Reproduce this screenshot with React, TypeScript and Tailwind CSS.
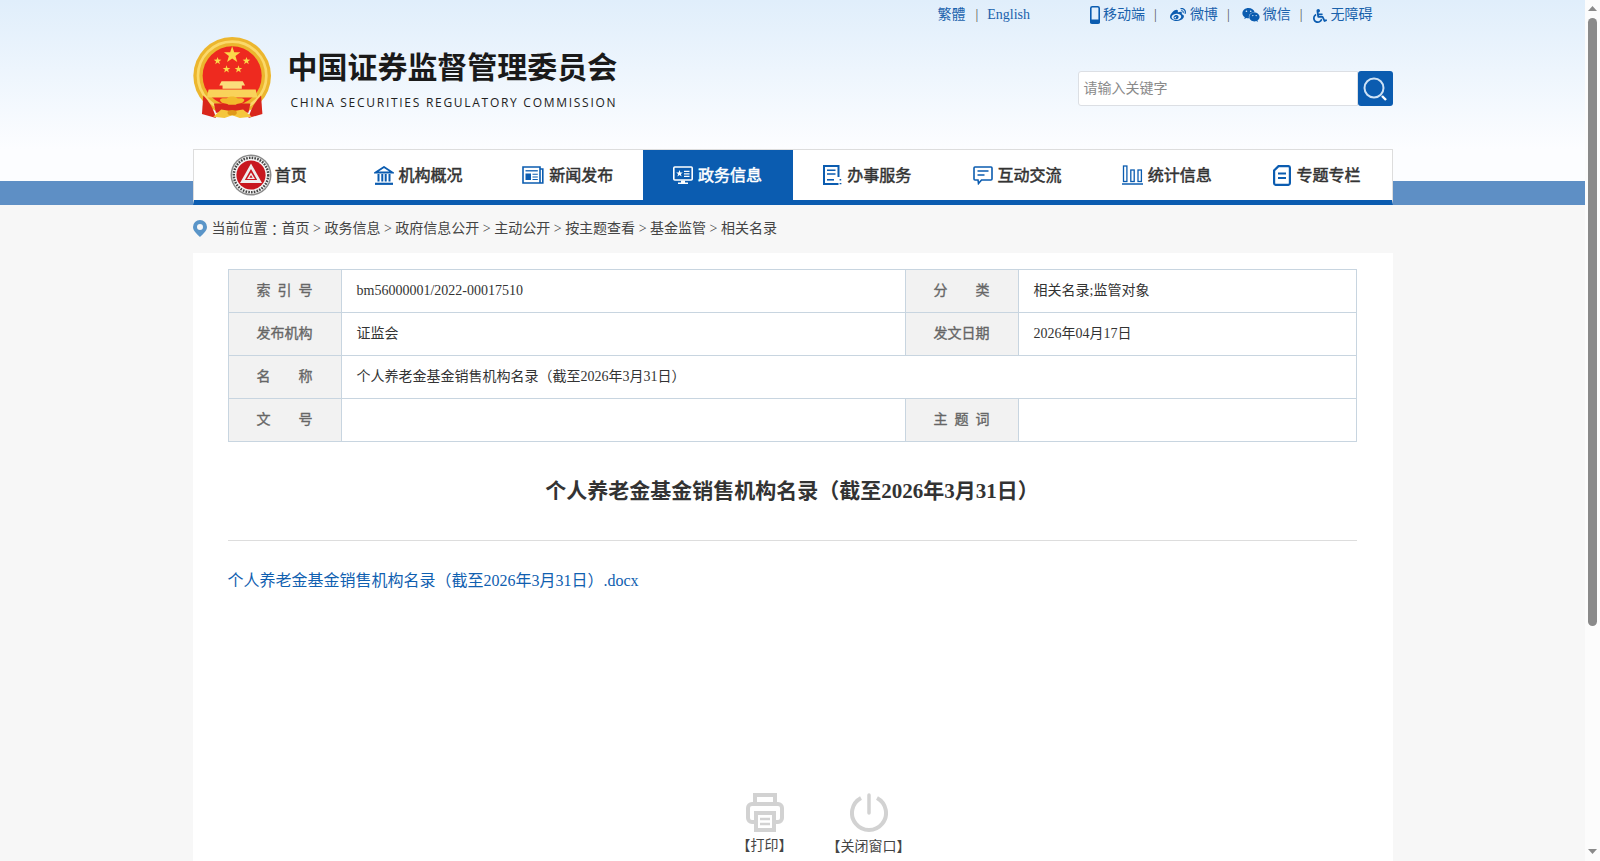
import React from "react";
import { FaWeibo, FaWeixin, FaWheelchair } from "react-icons/fa";

const Sep = () => <span className="mx-[9px] text-[#555]">|</span>;

const Star = ({ x, y, r }: { x: number; y: number; r: number }) => {
  const pts: string[] = [];
  for (let i = 0; i < 10; i++) {
    const rad = i % 2 === 0 ? r : r * 0.4;
    const a = (Math.PI / 5) * i - Math.PI / 2;
    pts.push(`${x + rad * Math.cos(a)},${y + rad * Math.sin(a)}`);
  }
  return <polygon points={pts.join(" ")} fill="#fbd94a" />;
};

const Emblem = () => (
  <svg viewBox="10 22 236 250" className="w-[79px] h-[83px] shrink-0">
    <circle cx="127" cy="139" r="117" fill="#ecb62e" />
    <circle cx="127" cy="139" r="103" fill="none" stroke="#fbd96a" strokeWidth="8" />
    <circle cx="127" cy="139" r="89" fill="#ee2a1f" />
    <Star x={127} y={76} r={26} />
    <Star x={83} y={94} r={12} />
    <Star x={170} y={94} r={12} />
    <Star x={110} y={119} r={12} />
    <Star x={146} y={119} r={12} />
    <path d="M95 155 L159 155 L166 168 L156 168 L156 178 L98 178 L98 168 L88 168 Z" fill="#fbdc7c" />
    <path d="M56 180 L198 180 L203 204 L51 204 Z" fill="#f9d25a" />
    <path d="M72 222 H182 L176 250 H78 Z" fill="#d9261c" />
    <path d="M40 198 C58 216 72 240 78 266 L36 254 Z" fill="#d9261c" />
    <path d="M214 198 C196 216 182 240 176 266 L218 254 Z" fill="#d9261c" />
    <path d="M90 212 C96 202 108 210 114 204 C120 200 134 200 140 204 C146 210 158 202 164 212 C158 226 146 220 138 226 L116 226 C108 220 96 226 90 212 Z" fill="#f2bb2c" />
    <path d="M70 262 L94 240 L127 246 L160 240 L186 262 L150 266 L127 258 L104 266 Z" fill="#f5c63c" />
    <ellipse cx="127" cy="250" rx="14" ry="8" fill="#e0991a" />
  </svg>
);

const HomeLogo = () => (
  <svg viewBox="0 0 42 42" className="w-[42px] h-[42px] shrink-0">
    <circle cx="21" cy="21" r="20.5" fill="#8b8b8b" />
    <circle cx="21" cy="21" r="19" fill="#f4f4f4" />
    <circle cx="21" cy="21" r="17.2" fill="none" stroke="#444" strokeWidth="2.4" strokeDasharray="1.6 1.2" />
    <circle cx="21" cy="21" r="14.6" fill="#c8171f" />
    <path d="M21 9.5 L32 29 L10 29 Z M21 15 L14.8 26 L27.2 26 Z" fill="#eee" fillRule="evenodd" />
    <path d="M21 18.5 L25 25 L17 25 Z" fill="#eee" />
    <path d="M21 21 L22.6 23.8 L19.4 23.8 Z" fill="#c8171f" />
  </svg>
);

const IconBank = () => (
  <svg viewBox="0 0 20 19" className="w-5 h-[19px]" fill="none" stroke="#0b5cb0" strokeWidth="1.8">
    <path d="M1.5 6.5 L10 1 L18.5 6.5 Z" />
    <path d="M4.5 8 V15.5 M8.3 8 V15.5 M11.7 8 V15.5 M15.5 8 V15.5" strokeWidth="2" />
    <path d="M1 17.8 H19" strokeWidth="2.2" />
  </svg>
);

const IconNews = () => (
  <svg viewBox="0 0 22 18" className="w-[22px] h-[18px]" fill="none" stroke="#0b5cb0" strokeWidth="1.6">
    <path d="M18 3 H20.8 V17 H1 V1 H18 V17" />
    <path d="M3.5 4.8 H15.8" strokeWidth="1.3" />
    <rect x="3.5" y="7.5" width="5.5" height="6.5" fill="#0b5cb0" stroke="none" />
    <path d="M10.5 8.3 H15.8 M10.5 11 H15.8 M10.5 13.5 H15.8" strokeWidth="1.1" />
  </svg>
);

const IconScreen = () => (
  <svg viewBox="0 0 20 19" className="w-5 h-[19px]">
    <rect x="0.8" y="1" width="18.4" height="13" rx="1" fill="none" stroke="#fff" strokeWidth="1.6" />
    <polygon points="6.5,4 7.4,6.4 9.8,6.5 7.9,8 8.6,10.4 6.5,9 4.4,10.4 5.1,8 3.2,6.5 5.6,6.4" fill="#fff" />
    <path d="M11 5.3 H16.5 M11 7.8 H16.5 M11 10.3 H16.5" stroke="#fff" strokeWidth="1.2" />
    <path d="M8 14.5 H12 V16.5 H15 V18 H5 V16.5 H8 Z" fill="#fff" />
  </svg>
);

const IconForm = () => (
  <svg viewBox="0 0 19 20" className="w-[19px] h-5" fill="none" stroke="#0b5cb0">
    <path d="M15.5 12 V1 H1 V19 H15.5" strokeWidth="2" />
    <path d="M4 5.3 H12.5 M4 9 H12.5" strokeWidth="1.6" />
    <path d="M4 14.8 H11" strokeWidth="1.6" />
    <path d="M13 18.6 H14.4 M16.6 18.6 H18.4 M16.6 14.8 H18.2" strokeWidth="1.4" />
  </svg>
);

const IconChat = () => (
  <svg viewBox="0 0 20 19" className="w-5 h-[19px]" fill="none" stroke="#0b5cb0" strokeWidth="1.6">
    <path d="M2 1 H18 A1 1 0 0 1 19 2 V13 A1 1 0 0 1 18 14 H8.5 L5.5 17.5 L5 14 H2 A1 1 0 0 1 1 13 V2 A1 1 0 0 1 2 1 Z" />
    <path d="M4.5 5 H15.5 M4.5 9 H11.5" strokeWidth="1.5" />
  </svg>
);

const IconBars = () => (
  <svg viewBox="0 0 21 20" className="w-[21px] h-5" fill="none" stroke="#0b5cb0" strokeWidth="1.3">
    <rect x="1.5" y="1" width="3.4" height="15.5" />
    <rect x="8.8" y="5" width="3.4" height="11.5" />
    <rect x="16" y="5" width="3.4" height="11.5" />
    <path d="M0 19 H21" strokeWidth="1.5" />
  </svg>
);

const IconDoc = () => (
  <svg viewBox="0 0 18 21" className="w-[18px] h-[21px]" fill="none" stroke="#0b5cb0" strokeWidth="2.2">
    <path d="M5.5 1.2 H15.5 A1.5 1.5 0 0 1 16.9 2.7 V18.3 A1.5 1.5 0 0 1 15.5 19.8 H2.5 A1.5 1.5 0 0 1 1.1 18.3 V5.5 Z" />
    <path d="M5 8.5 H13 M5 13 H13" strokeWidth="2.2" />
  </svg>
);

const navItems = [
  { label: "首页", icon: <HomeLogo />, gap: "gap-[3px]" },
  { label: "机构概况", icon: <IconBank />, gap: "gap-[5px]" },
  { label: "新闻发布", icon: <IconNews />, gap: "gap-[5px]" },
  { label: "政务信息", icon: <IconScreen />, gap: "gap-[5px] bg-[#0b5cb0] text-white" },
  { label: "办事服务", icon: <IconForm />, gap: "gap-[5px]" },
  { label: "互动交流", icon: <IconChat />, gap: "gap-[5px]" },
  { label: "统计信息", icon: <IconBars />, gap: "gap-[5px]" },
  { label: "专题专栏", icon: <IconDoc />, gap: "gap-[6px]" },
];

const crumbs = ["首页", "政务信息", "政府信息公开", "主动公开", "按主题查看", "基金监管", "相关名录"];

const Label = ({ chars }: { chars: string }) => (
  <td className="bg-[#f2f2f2] border border-[#c8d5e0] text-center text-[#666] [-webkit-text-stroke:0.35px_#666]">
    <span className="inline-flex w-14 justify-between align-middle">
      {chars.split("").map((c, i) => (
        <span key={i}>{c}</span>
      ))}
    </span>
  </td>
);

const Value = ({ children, span }: { children?: React.ReactNode; span?: number }) => (
  <td colSpan={span} className="border border-[#c8d5e0] pl-[15px] text-[#333]">
    {children}
  </td>
);

// the window's scrollbar, drawn because the headless browser hides its own
const Scrollbar = () => (
  <div className="w-[15px] shrink-0 bg-[#fcfcfc] flex flex-col items-center pt-[6px] pb-[7px]">
    <svg viewBox="0 0 9 5" className="w-[9px] h-[5px]">
      <polygon points="4.5,0 9,5 0,5" fill="#8a8a8a" />
    </svg>
    <div className="mt-[7px] w-[9px] h-[608px] rounded-full bg-[#8a8a8a]" />
    <svg viewBox="0 0 9 5" className="mt-auto w-[9px] h-[5px]">
      <polygon points="0,0 9,0 4.5,5" fill="#8a8a8a" />
    </svg>
  </div>
);

export default function App() {
  return (
    <div className="h-screen flex overflow-hidden bg-[#f7f7f7] font-['Liberation_Serif','Noto_Sans_CJK_SC',serif] text-sm">
      <div className="flex-1 min-w-0 overflow-hidden">
        <header className="h-[149px] bg-gradient-to-b from-[#e0eefb] to-[#fcfdff]">
          <div className="w-[1200px] mx-auto">
            <div className="h-[30px] flex items-center justify-end pr-[20px] text-[#1a62ac]">
              <a>繁體</a>
              <span className="ml-[10px] mr-[9px] text-[#555]">|</span>
              <a>English</a>
              <div className="w-[60px]" />
              <svg viewBox="0 0 10 18" className="w-[10px] h-[18px] mr-[3px]">
                <rect x="0.8" y="0.8" width="8.4" height="16.4" rx="1.5" fill="none" stroke="#0b5cb0" strokeWidth="1.6" />
                <rect x="0" y="13.5" width="10" height="4" rx="1.5" fill="#0b5cb0" />
              </svg>
              <a>移动端</a>
              <Sep />
              <FaWeibo className="ml-[3px] w-[18px] h-[16px] mr-[3px] text-[#0b5cb0]" />
              <a>微博</a>
              <Sep />
              <FaWeixin className="ml-[3px] w-[18px] h-[16px] mr-[3px] text-[#0b5cb0]" />
              <a>微信</a>
              <Sep />
              <FaWheelchair className="ml-[1px] mt-[2px] w-[14px] h-[16px] mr-[4px] text-[#0b5cb0]" />
              <a>无障碍</a>
            </div>
            <div className="flex justify-between pt-[7px]">
              <div className="flex">
                <Emblem />
                <div className="ml-[16px] pt-[9px] font-['Noto_Sans_CJK_SC',sans-serif]">
                  <div className="text-[30px] leading-[38px] font-bold tracking-[-0.03px] text-[#1a1a1a] whitespace-nowrap">
                    中国证券监督管理委员会
                  </div>
                  <div className="mt-[12px] ml-[3px] font-['Open_Sans',sans-serif] text-[12px] leading-[14px] tracking-[1.72px] text-[#222] whitespace-nowrap">
                    CHINA SECURITIES REGULATORY COMMISSION
                  </div>
                </div>
              </div>
              <div className="flex h-[35px] mt-[34px]">
                <div className="w-[280px] bg-white border border-[#dcdfe4] rounded-l-[3px] pl-[5px] pt-[1px] flex items-center text-[#8a8a8a]">
                  请输入关键字
                </div>
                <button className="w-[35px] bg-[#0b5cb0] rounded-[3px] flex items-center justify-center">
                  <svg viewBox="0 0 26 26" className="w-[26px] h-[26px]" fill="none">
                    <circle cx="12" cy="12" r="9.5" stroke="#cfe2f5" strokeWidth="2" />
                    <path d="M20 20 L24 24" stroke="#fff" strokeWidth="2.4" />
                  </svg>
                </button>
              </div>
            </div>
          </div>
        </header>

        <div className="h-[56px] bg-[linear-gradient(to_bottom,#fcfdff_32px,#5e8fc5_32px)]">
          <nav className="w-[1200px] h-[56px] mx-auto bg-white border-t border-x border-[#ddd] border-b-[5px] border-b-[#0b5cb0] grid grid-cols-8 font-['Noto_Sans_CJK_SC',sans-serif] text-base text-[#333]">
            {navItems.map((item) => (
              <a key={item.label} className={`flex items-center justify-center ${item.gap}`}>
                {item.icon}
                <span className="pb-[2px] [-webkit-text-stroke:0.5px]">{item.label}</span>
              </a>
            ))}
          </nav>
        </div>

        <main className="w-[1200px] mx-auto">
          <div className="h-[48px] flex items-center pb-[1px] text-[#444]">
            <svg viewBox="0 0 14 17" className="w-[14px] h-[17px] mr-[5px]">
              <path
                d="M7 0 A7 7 0 0 1 14 7 C14 11 9.5 14.5 7 17 C4.5 14.5 0 11 0 7 A7 7 0 0 1 7 0 Z M7 4 A3 3 0 1 0 7 10 A3 3 0 1 0 7 4 Z"
                fill="#5a95c8"
                fillRule="evenodd"
              />
            </svg>
            当前位置<span className="font-['Noto_Sans_CJK_JP',sans-serif]">：</span>
            {crumbs.map((c, i) => (
              <span key={c} className="whitespace-pre">
                {i > 0 ? " > " : ""}
                {c}
              </span>
            ))}
          </div>

          <section className="bg-white px-[35px] pt-[16px] min-h-[924px]">
            <table className="w-[1129px] table-fixed border-collapse">
              <colgroup>
                <col className="w-[113px]" />
                <col className="w-[564px]" />
                <col className="w-[113px]" />
                <col />
              </colgroup>
              <tbody>
                <tr className="h-[43px]">
                  <Label chars="索引号" />
                  <Value>bm56000001/2022-00017510</Value>
                  <Label chars="分类" />
                  <Value>相关名录;监管对象</Value>
                </tr>
                <tr className="h-[43px]">
                  <Label chars="发布机构" />
                  <Value>证监会</Value>
                  <Label chars="发文日期" />
                  <Value>2026年04月17日</Value>
                </tr>
                <tr className="h-[43px]">
                  <Label chars="名称" />
                  <Value span={3}>个人养老金基金销售机构名录（截至2026年3月31日）</Value>
                </tr>
                <tr className="h-[43px]">
                  <Label chars="文号" />
                  <Value />
                  <Label chars="主题词" />
                  <Value />
                </tr>
              </tbody>
            </table>

            <h1 className="h-[99px] pb-[1px] flex items-center justify-center text-[21px] font-bold text-[#333] border-b border-[#ddd] w-[1129px]">
              个人养老金基金销售机构名录（截至2026年3月31日）
            </h1>

            <a className="block mt-[28px] text-base leading-6 text-[#1060b0]">
              个人养老金基金销售机构名录（截至2026年3月31日）.docx
            </a>

            <div className="mt-[200px] flex justify-center pl-[51px] gap-[23px] text-[#444]">
              <div className="flex flex-col items-center w-[78px]">
                <svg viewBox="0 0 38 39" className="w-[38px] h-[39px]" fill="none" stroke="#d2d2d2" strokeWidth="4">
                  <path d="M9 11 V2 H29 V11" />
                  <path d="M9 29 H6 A4 4 0 0 1 2 25 V15 A4 4 0 0 1 6 11 H32 A4 4 0 0 1 36 15 V25 A4 4 0 0 1 32 29 H29" />
                  <rect x="10" y="20" width="18" height="17" />
                  <path d="M14 26 H24 M14 31 H24" strokeWidth="2.5" />
                </svg>
                <span className="mt-[4px] leading-5">【打印】</span>
              </div>
              <div className="flex flex-col items-center w-[84px]">
                <svg viewBox="0 0 38 39" className="w-[38px] h-[39px]" fill="none" stroke="#d2d2d2" strokeWidth="4">
                  <path d="M11 5 A17 17 0 1 0 27 5" />
                  <path d="M19 2 V20" strokeLinecap="round" strokeWidth="3.5" />
                </svg>
                <span className="mt-[5px] leading-5">【关闭窗口】</span>
              </div>
            </div>
          </section>
        </main>
      </div>
      <Scrollbar />
    </div>
  );
}
